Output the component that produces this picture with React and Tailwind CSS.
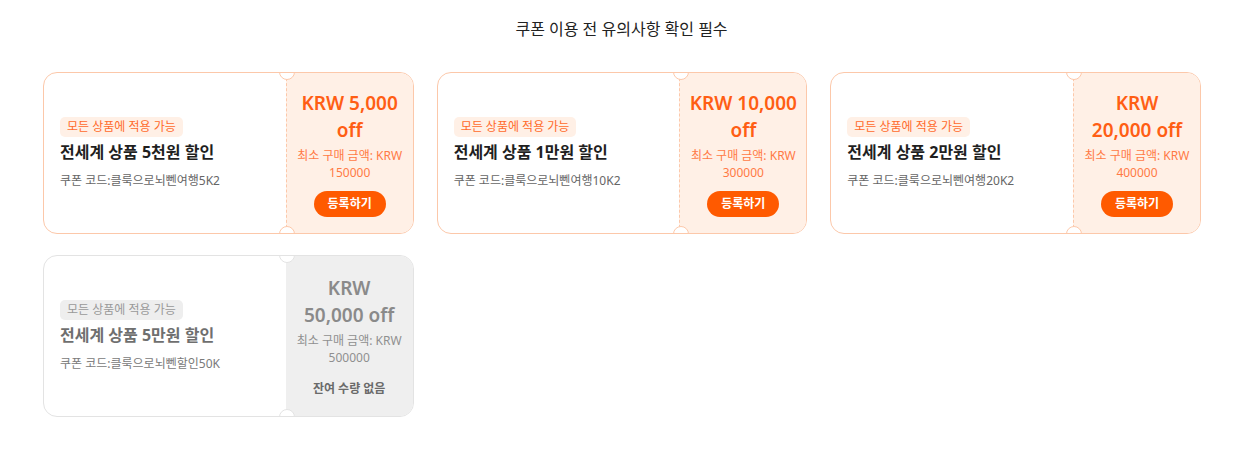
import React from 'react';

const coupons = [
  { id: 1, title: '전세계 상품 5천원 할인', code: '클룩으로뇌뻰여행5K2', amount: ['KRW 5,000', 'off'], min: '150000', soldOut: false },
  { id: 2, title: '전세계 상품 1만원 할인', code: '클룩으로뇌뻰여행10K2', amount: ['KRW 10,000', 'off'], min: '300000', soldOut: false },
  { id: 3, title: '전세계 상품 2만원 할인', code: '클룩으로뇌뻰여행20K2', amount: ['KRW', '20,000 off'], min: '400000', soldOut: false },
  { id: 4, title: '전세계 상품 5만원 할인', code: '클룩으로뇌뻰할인50K', amount: ['KRW', '50,000 off'], min: '500000', soldOut: true },
];

const CouponCard = ({ coupon }) => {
  const off = coupon.soldOut;
  return (
    <div
      className={`relative flex h-[162px] overflow-hidden rounded-[14px] border bg-white ${
        off ? 'border-[#e3e3e3]' : 'border-[#fcc8aa]'
      }`}
    >
      {/* left info */}
      <div className="flex flex-1 flex-col justify-center pl-4">
        <span
          className={`self-start rounded-[5px] px-[7px] py-[2px] text-[12px] leading-[16px] ${
            off ? 'bg-[#eeeeee] text-[#999999]' : 'bg-[#fff0e6] text-[#ff6a2b]'
          }`}
        >
          모든 상품에 적용 가능
        </span>
        <div className={`mt-[3px] text-[16px] font-bold leading-[24px] ${off ? 'text-[#6f6f6f]' : 'text-[#1f1f1f]'}`}>
          {coupon.title}
        </div>
        <div className={`mt-[8px] text-[12px] leading-[18px] ${off ? 'text-[#7a7a7a]' : 'text-[#666666]'}`}>
          쿠폰 코드:{coupon.code}
        </div>
      </div>

      {/* right amount */}
      <div
        className={`flex w-[127px] flex-col items-center justify-center px-2 text-center ${
          off ? 'bg-[#efefef]' : 'border-l border-dashed border-[#fcc8aa] bg-[#fff0e6]'
        }`}
      >
        <div className={`text-[19px] font-semibold leading-[27px] ${off ? 'text-[#8a8a8a]' : 'text-[#ff5e14]'}`}>
          <span className="block">{coupon.amount[0]}</span>
          <span className="block">{coupon.amount[1]}</span>
        </div>
        <div className={`mt-[3px] text-[12px] leading-[17px] ${off ? 'text-[#8f8f8f]' : 'text-[#ff7a45]'}`}>
          <span className="block">최소 구매 금액: KRW</span>
          <span className="block">{coupon.min}</span>
        </div>
        {off ? (
          <div className="mt-[14px] text-[12px] font-bold leading-[18px] text-[#6a6a6a]">잔여 수량 없음</div>
        ) : (
          <button className="mt-[10px] h-[26px] rounded-full bg-[#ff5a00] px-[14px] text-[12px] font-bold text-white">
            등록하기
          </button>
        )}
      </div>

      {/* notches */}
      <span
        className={`absolute left-[235px] top-[-9px] h-[16px] w-[16px] rounded-full border bg-white ${
          off ? 'border-[#e3e3e3]' : 'border-[#fcc8aa]'
        }`}
      />
      <span
        className={`absolute bottom-[-9px] left-[235px] h-[16px] w-[16px] rounded-full border bg-white ${
          off ? 'border-[#e3e3e3]' : 'border-[#fcc8aa]'
        }`}
      />
    </div>
  );
};

const App = () => {
  return (
    <div
      className="min-h-[455px] bg-white pt-[18px]"
      style={{ fontFamily: '"Noto Sans", "Noto Sans CJK KR", sans-serif' }}
    >
      <h1 className="ml-[4px] text-center text-[16px] leading-[22px] text-[#222222]">쿠폰 이용 전 유의사항 확인 필수</h1>
      <div className="ml-[43px] mt-[32px] grid w-[1158px] grid-cols-3 gap-x-[23px] gap-y-[21px]">
        {coupons.map(c => (
          <CouponCard key={c.id} coupon={c} />
        ))}
      </div>
    </div>
  );
};

export default App;
